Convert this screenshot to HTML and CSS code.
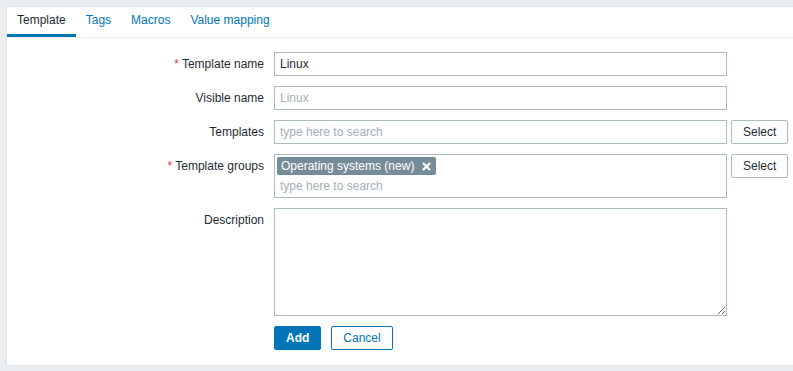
FILE: index.html
```html
<!DOCTYPE html>
<html lang="en">
<head>
    <meta charset="UTF-8">
    <meta name="viewport" content="width=device-width, initial-scale=1.0">
    <title>Templates</title>
    <link rel="stylesheet" href="styles.css">
</head>
<body>
    <div class="container">
        <ul class="tabs">
            <li class="tab active">Template</li>
            <li class="tab">Tags</li>
            <li class="tab">Macros</li>
            <li class="tab">Value mapping</li>
        </ul>

        <form class="form-grid">
            <label class="form-label"><span class="required">*</span> Template name</label>
            <input class="text-input" type="text" value="Linux">
            <div></div>

            <label class="form-label">Visible name</label>
            <input class="text-input" type="text" placeholder="Linux">
            <div></div>

            <label class="form-label">Templates</label>
            <input class="text-input" type="text" placeholder="type here to search">
            <button type="button" class="btn-alt">Select</button>

            <label class="form-label"><span class="required">*</span> Template groups</label>
            <div class="multiselect">
                <span class="tag">Operating systems (new)<svg class="tag-remove" width="9" height="9" viewBox="0 0 9 9"><path d="M1 1L8 8M8 1L1 8" stroke="#ffffff" stroke-width="2.2"/></svg></span>
                <input class="multi-input" type="text" placeholder="type here to search">
            </div>
            <button type="button" class="btn-alt">Select</button>

            <label class="form-label">Description</label>
            <textarea class="text-area"></textarea>
            <div></div>

            <div></div>
            <div class="form-actions">
                <button type="button" class="btn-primary">Add</button>
                <button type="button" class="btn-cancel">Cancel</button>
            </div>
            <div></div>
        </form>
    </div>
</body>
</html>
```

FILE: styles.css
```css
body {
    font-family: "Liberation Sans", Arial, sans-serif;
    font-size: 12px;
    margin: 0;
    padding: 6px 0 5px 6px;
    background-color: #ebeef0;
    color: #1f2c33;
    overflow: hidden;
}
.container {
    background: #ffffff;
    border: 1px solid #dfe4e7;
    border-right: none;
    height: 360px;
    box-sizing: border-box;
}
.tabs {
    display: flex;
    list-style: none;
    margin: 0;
    padding: 0;
    border-bottom: 1px solid #ebeef0;
}
.tab {
    height: 27px;
    line-height: 27px;
    padding: 0 10px;
    color: #0275b8;
    border-bottom: 3px solid transparent;
}
.tab.active {
    color: #1f2c33;
    border-bottom-color: #0275b8;
}
.form-grid {
    display: grid;
    grid-template-columns: 267px 453px auto;
    row-gap: 10px;
    padding-top: 14px;
    align-items: start;
}
.form-label {
    text-align: right;
    padding-right: 10px;
    line-height: 24px;
}
.required {
    color: #e33734;
}
.text-input, .multi-input {
    font-family: inherit;
    font-size: 12px;
    color: #1f2c33;
    outline: none;
}
.text-input {
    box-sizing: border-box;
    width: 453px;
    height: 24px;
    margin: 0;
    padding: 0 5px;
    border: 1px solid #acbbc2;
    background: #ffffff;
}
::placeholder {
    color: #a3b0b6;
    opacity: 1;
}
.multiselect {
    box-sizing: border-box;
    width: 453px;
    height: 44px;
    border: 1px solid #acbbc2;
    padding: 2px;
}
.tag {
    display: inline-flex;
    align-items: center;
    height: 18px;
    padding: 0 5px 0 4px;
    background: #768d99;
    color: #ffffff;
    border-radius: 2px;
}
.tag-remove {
    margin-left: 8px;
}
.multi-input {
    display: block;
    box-sizing: border-box;
    width: 100%;
    height: 21px;
    margin: 0;
    padding: 0 3px;
    border: none;
    background: transparent;
}
.text-area {
    box-sizing: border-box;
    width: 453px;
    height: 108px;
    margin: 0;
    border: 1px solid #acbbc2;
    font-family: inherit;
    font-size: 12px;
    outline: none;
}
.btn-alt, .btn-primary, .btn-cancel {
    box-sizing: border-box;
    height: 24px;
    font-family: inherit;
    font-size: 12px;
    border-radius: 2px;
    cursor: pointer;
}
.btn-alt {
    justify-self: start;
    margin-left: 4px;
    padding: 0 11px;
    background: #ffffff;
    color: #1f2c33;
    border: 1px solid #acbbc2;
}
.form-actions {
    display: flex;
    gap: 10px;
}
.btn-primary {
    padding: 0 11px;
    background: #0275b8;
    color: #ffffff;
    border: 1px solid #0275b8;
    font-weight: bold;
}
.btn-cancel {
    padding: 0 11px;
    background: #ffffff;
    color: #0275b8;
    border: 1px solid #0275b8;
}
```
